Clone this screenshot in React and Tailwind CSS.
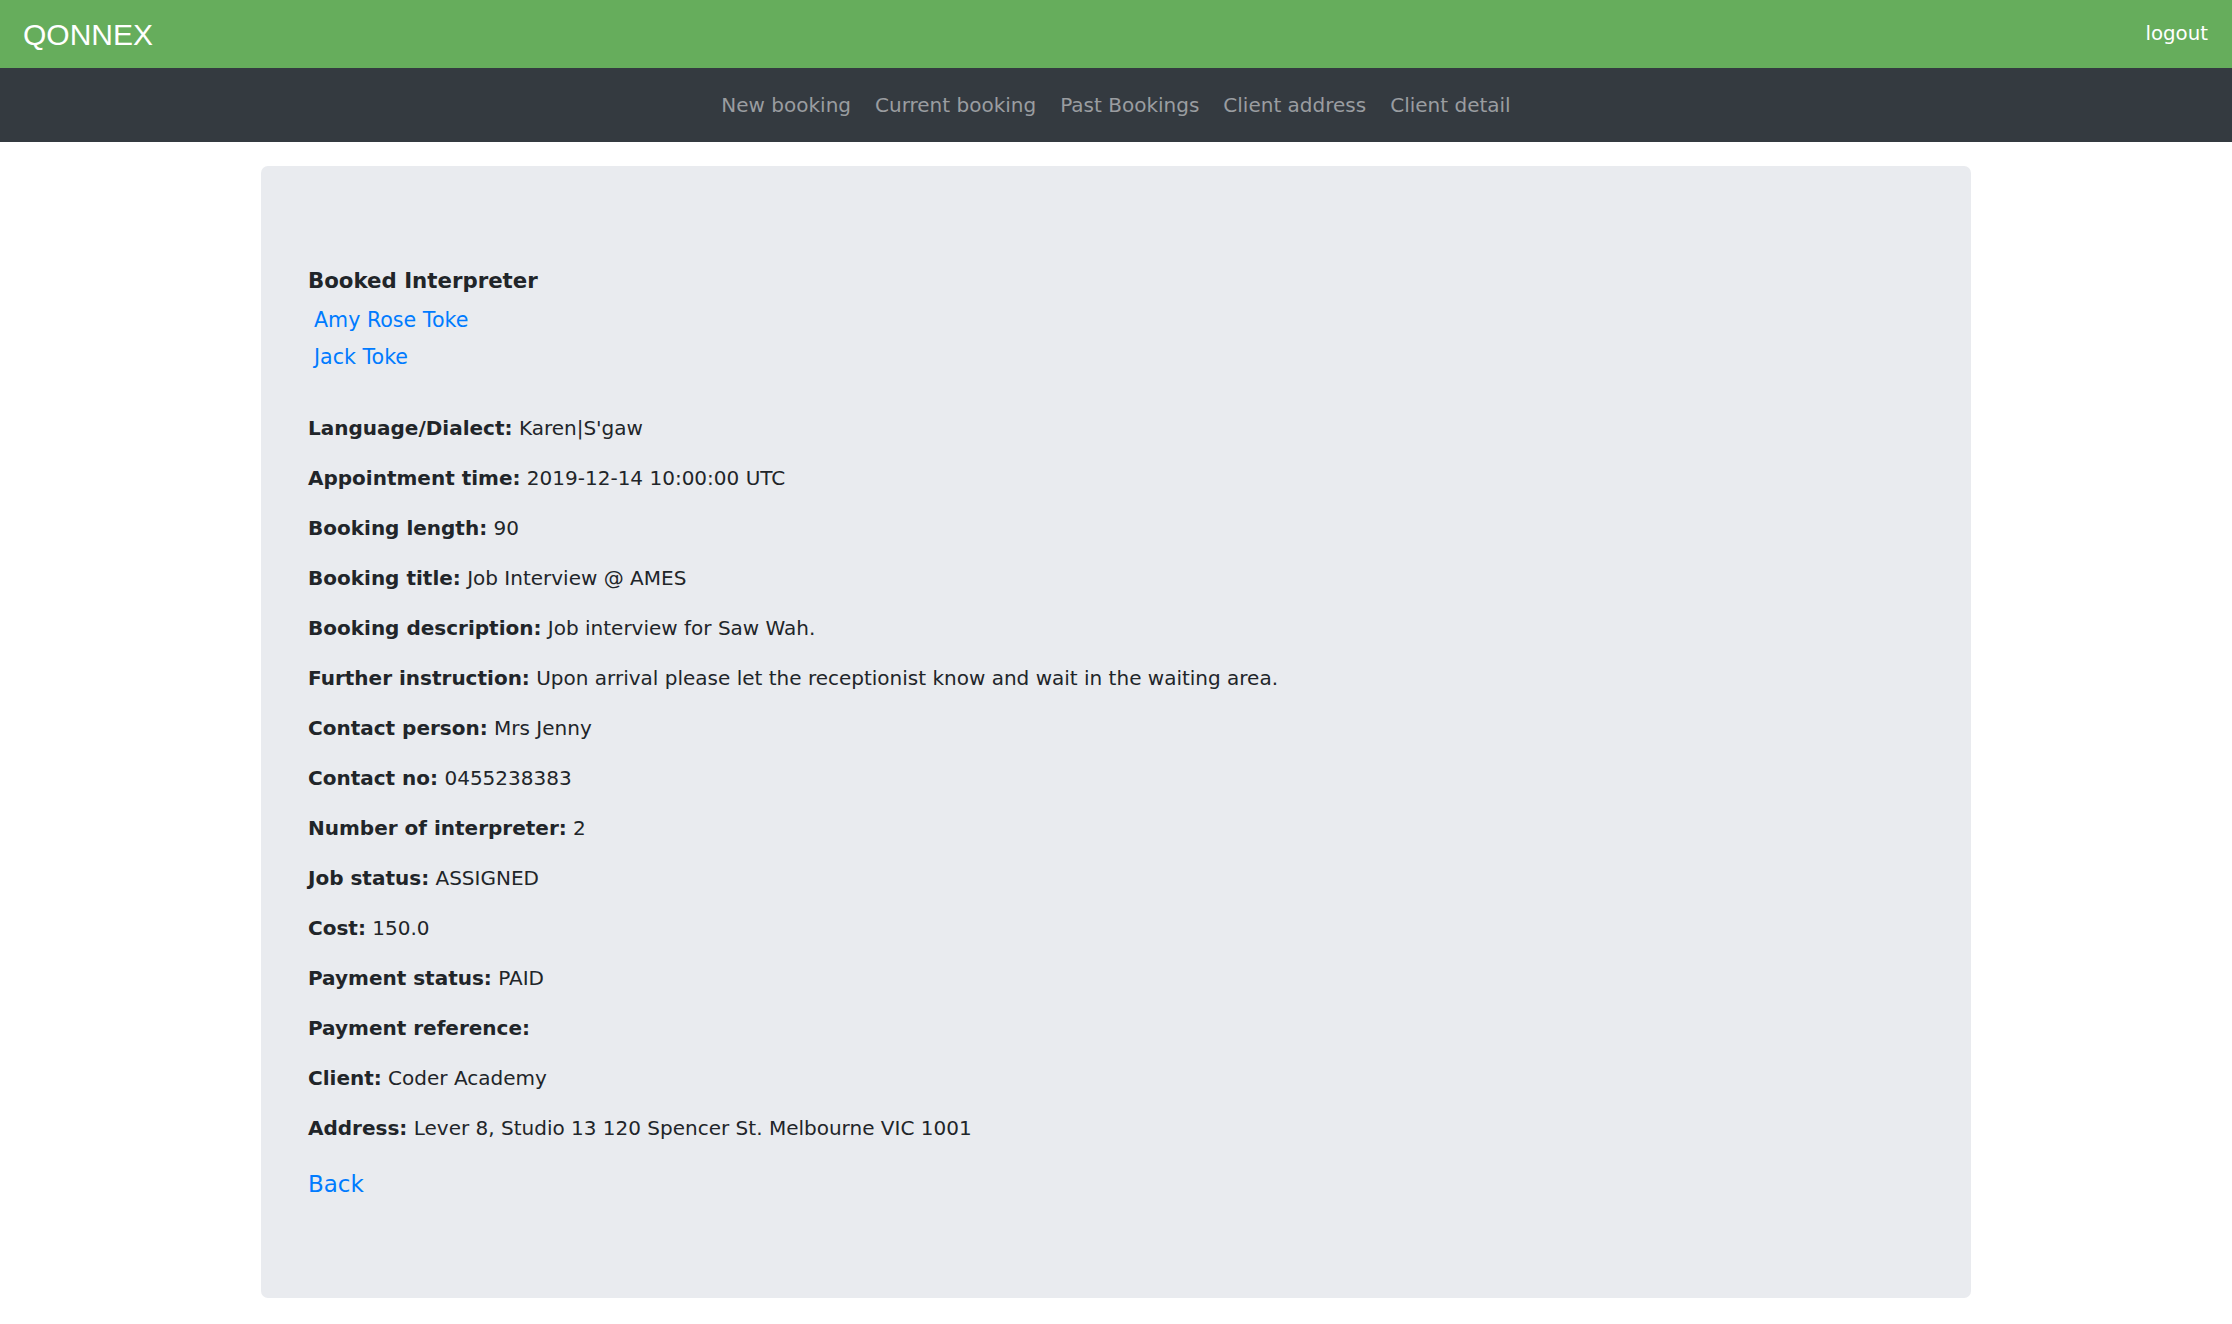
const rows = [
  ["Language/Dialect:", "Karen|S'gaw"],
  ["Appointment time:", "2019-12-14 10:00:00 UTC"],
  ["Booking length:", "90"],
  ["Booking title:", "Job Interview @ AMES"],
  ["Booking description:", "Job interview for Saw Wah."],
  ["Further instruction:", "Upon arrival please let the receptionist know and wait in the waiting area."],
  ["Contact person:", "Mrs Jenny"],
  ["Contact no:", "0455238383"],
  ["Number of interpreter:", "2"],
  ["Job status:", "ASSIGNED"],
  ["Cost:", "150.0"],
  ["Payment status:", "PAID"],
  ["Payment reference:", ""],
  ["Client:", "Coder Academy"],
  ["Address:", "Lever 8, Studio 13 120 Spencer St. Melbourne VIC 1001"],
];

const navLinks = ["New booking", "Current booking", "Past Bookings", "Client address", "Client detail"];

export default function App() {
  return (
    <div className="min-h-screen bg-white text-[#212529] font-['DejaVu_Sans',sans-serif]">
      {/* Top bar */}
      <header className="h-[68px] bg-[#66ad5c] flex items-center justify-between pl-[23px] pr-[24px]">
        <span className="text-white text-[30px] font-['Liberation_Sans',Arial,sans-serif]">QONNEX</span>
        <a href="#" className="text-white text-[19.8px]">logout</a>
      </header>

      {/* Nav */}
      <nav className="h-[74px] bg-[#343a40] flex items-center justify-center gap-[24px]">
        {navLinks.map((l) => (
          <a key={l} href="#" className="text-[20px] text-[#9a9da0]">
            {l}
          </a>
        ))}
      </nav>

      {/* Card */}
      <div className="mt-[24px] mx-auto w-[1710px] rounded-[7px] bg-[#e9ebef] pl-[47px] pt-[100px] pb-[97px]">
        <h5 className="text-[21.3px] font-bold leading-[30px]">Booked Interpreter</h5>
        <ul className="mt-[9px] pl-[6px] flex flex-col gap-[7px]">
          <li><a href="#" className="text-[20.6px] leading-[30px] text-[#007bff]">Amy Rose Toke</a></li>
          <li><a href="#" className="text-[20.6px] leading-[30px] text-[#007bff]">Jack Toke</a></li>
        </ul>

        <div className="mt-[41px]">
          {rows.map(([k, v]) => (
            <p key={k} className="text-[20px] leading-[30px] mb-[20px]">
              <span className="font-bold">{k}</span> {v}
            </p>
          ))}
        </div>

        <a href="#" className="block mt-[24px] text-[23px] leading-[34px] text-[#007bff]">Back</a>
      </div>
    </div>
  );
}
